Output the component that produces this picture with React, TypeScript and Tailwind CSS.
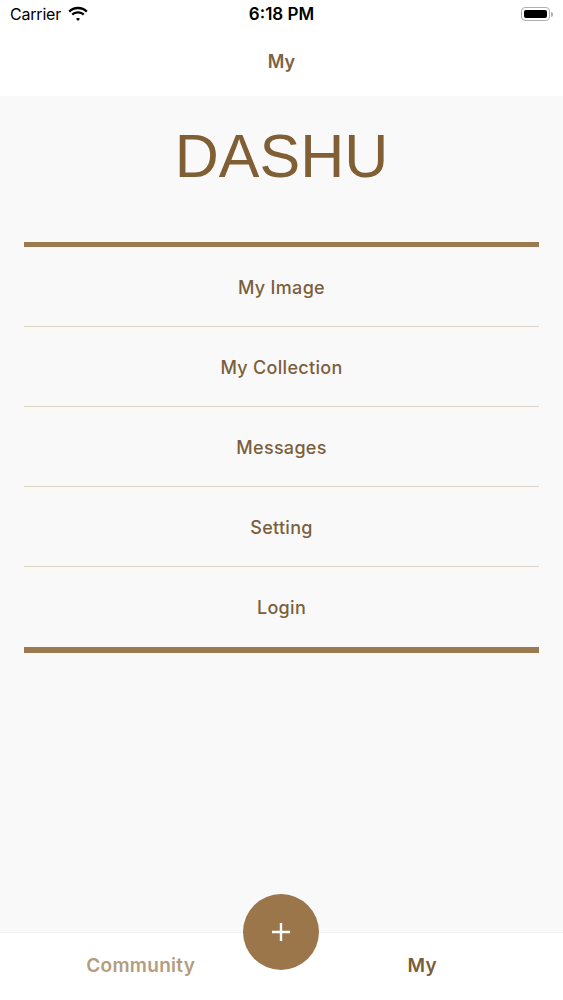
import React from "react";

const items = ["My Image", "My Collection", "Messages", "Setting", "Login"];

function Wifi() {
  return (
    <svg width="22" height="16" viewBox="0 0 22 16" fill="#000">
      <path d="M11 3.2c3.1 0 5.9 1.2 8 3.2l1.6-1.7C18.1 2.3 14.7.8 11 .8S3.9 2.3 1.4 4.7L3 6.4c2.1-2 4.9-3.2 8-3.2z" />
      <path d="M11 7.6c1.9 0 3.6.7 4.9 1.9l1.6-1.7C15.8 6.2 13.5 5.2 11 5.2S6.2 6.2 4.5 7.8l1.6 1.7C7.4 8.3 9.1 7.6 11 7.6z" />
      <path d="M11 11.9c.8 0 1.5.3 2 .8L11 14.9l-2-2.2c.5-.5 1.2-.8 2-.8z" />
    </svg>
  );
}

export default function App() {
  const font = { fontFamily: 'Inter, "Liberation Sans", sans-serif' };
  return (
    <div className="w-[563px] h-[1000px] flex flex-col bg-[#faf9fa] relative overflow-hidden" style={font}>
      {/* Status bar */}
      <div className="bg-white h-[28px] flex items-center justify-between px-[10px] relative">
        <div className="flex items-center gap-[6px]">
          <span className="text-[16px] text-black tracking-[-0.2px]">Carrier</span>
          <Wifi />
        </div>
        <span className="absolute left-1/2 top-1/2 -translate-x-1/2 -translate-y-1/2 text-[17px] leading-none font-semibold text-black">
          6:18 PM
        </span>
        <div className="flex items-center">
          <div className="w-[29px] h-[14px] rounded-[4px] border border-[#b0b0b0] p-[2px]">
            <div className="w-full h-full bg-black rounded-[2px]" />
          </div>
          <div className="w-[2px] h-[5px] bg-[#b0b0b0] rounded-r-sm ml-[1px]" />
        </div>
      </div>
      {/* Nav bar */}
      <div className="bg-white h-[68px] pb-[2px] flex items-center justify-center">
        <span className="text-[18px] font-semibold text-[#7a6444]">My</span>
      </div>
      {/* Main */}
      <div className="flex-1 flex flex-col">
        <div className="h-[146px] pt-[30px] flex justify-center">
          <span
            className="text-[61px] leading-none text-[#7f5f33] font-normal"
            style={{ fontFamily: '"Liberation Sans", Arial, sans-serif' }}
          >
            DASHU
          </span>
        </div>
        <div className="mx-[24px] h-[5px] bg-[#9b7a4f]" />
        <div className="mx-[24px] flex flex-col">
          {items.map((t, i) => (
            <div
              key={t}
              className={`h-[80px] pt-[1px] flex items-center justify-center ${i < items.length - 1 ? "border-b border-[#dcd3c6]" : ""}`}
            >
              <span className="text-[18px] font-medium text-[#7a5f3d] tracking-[0.3px]">{t}</span>
            </div>
          ))}
        </div>
        <div className="mx-[24px] h-[6px] bg-[#9b7a4f]" />
      </div>
      {/* Tab bar */}
      <div className="bg-white h-[68px] flex relative border-t border-[#f2f0f2]">
        <div className="flex-1 flex items-center justify-center">
          <span className="text-[19px] font-semibold text-[#b39d80] tracking-[0.3px]">Community</span>
        </div>
        <div className="flex-1 flex items-center justify-center">
          <span className="text-[19px] font-semibold text-[#7a5e38] tracking-[0.3px]">My</span>
        </div>
        <div className="absolute left-[243px] top-[-39px] w-[76px] h-[76px] rounded-full bg-[#9a764a] flex items-center justify-center">
          <svg width="20" height="20" viewBox="0 0 20 20">
            <path d="M10 1v18M1 10h18" stroke="#fff" strokeWidth="2.4" />
          </svg>
        </div>
      </div>
    </div>
  );
}
